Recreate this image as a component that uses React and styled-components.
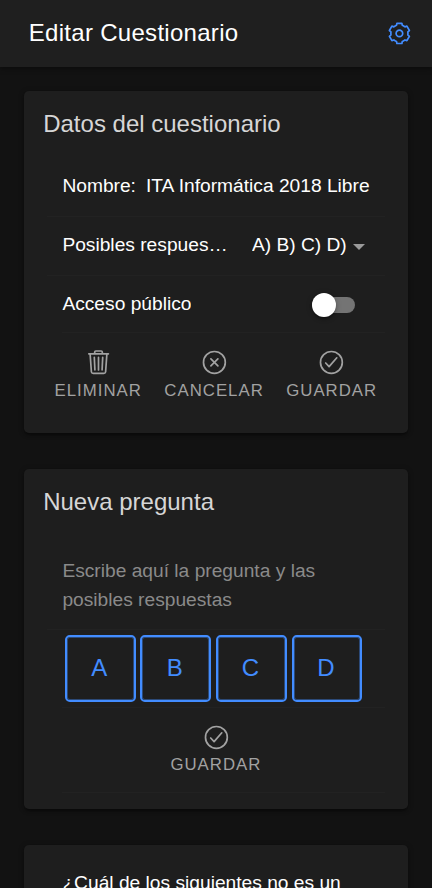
import React from "react";
import styled, { createGlobalStyle } from "styled-components";

const GlobalStyle = createGlobalStyle`
  * { box-sizing: border-box; }
  html, body { margin: 0; height: 100%; overflow: hidden; background: #121212; }
  body { font-family: "Liberation Sans", Arial, sans-serif; color: #fff; }
  button { font-family: inherit; }
`;

const Screen = styled.div`
  height: 888px;
  overflow: hidden;
  background: #121212;
  display: flex;
  flex-direction: column;
`;

const Header = styled.header`
  flex: none;
  height: 67.2px;
  padding: 0 18px 0 28.8px;
  display: flex;
  align-items: center;
  justify-content: space-between;
  background: #1f1f1f;
  box-shadow: 0 2px 5px rgba(0, 0, 0, 0.35);
`;

const Title = styled.h1`
  margin: 0 0 2px;
  font-size: 24px;
  font-weight: 400;
  line-height: 29px;
  letter-spacing: 0.29px;
`;

const Icon = styled.svg`
  display: block;
  width: 28.8px;
  height: 28.8px;
  margin-left: ${(p) => p.$shift || 0}px;
  fill: none;
  stroke: currentColor;
  stroke-width: 1.7;
  stroke-linecap: round;
  stroke-linejoin: round;
`;

const IconButton = styled.button`
  display: flex;
  padding: 0;
  border: 0;
  background: none;
  color: #428cff;
`;

const Content = styled.main`
  padding: 24px;
  display: flex;
  flex-direction: column;
  gap: 36px;
`;

const Card = styled.section`
  flex: none;
  height: ${(p) => p.$height}px;
  padding: ${(p) => p.$pad || "19.2px 19.2px 0"};
  border-radius: 4.8px;
  background: #1e1e1e;
  box-shadow: 0 3px 2px -2px rgba(0, 0, 0, 0.3), 0 2px 3px rgba(0, 0, 0, 0.2),
    0 1px 6px rgba(0, 0, 0, 0.2);
`;

const CardTitle = styled.h2`
  margin: 0;
  font-size: 24px;
  font-weight: 400;
  line-height: 28.8px;
  color: #d6d6d6;
`;

const List = styled.div`
  padding: ${(p) => p.$top}px 4px 0 4px;
  display: flex;
  flex-direction: column;
`;

const Row = styled.div`
  height: ${(p) => p.$height || 58.8}px;
  margin-left: ${(p) => (p.$inset ? 15.2 : 0)}px;
  padding-left: ${(p) => (p.$inset ? 0 : 15.2)}px;
  padding-bottom: ${(p) => p.$lift || 0}px;
  display: flex;
  align-items: center;
  border-bottom: 1px solid #222;
  font-size: 19.2px;
  white-space: nowrap;
`;

const Label = styled.span`
  width: ${(p) => (p.$width ? `${p.$width}px` : "auto")};
  margin-right: ${(p) => p.$gap || 0}px;
  overflow: hidden;
  text-overflow: ellipsis;
  line-height: 24px;
`;

const Caret = styled.span`
  margin: 4px 0 0 6px;
  border: 6px solid transparent;
  border-top-color: #9a9a9a;
  border-bottom: 0;
`;

const Track = styled.span`
  width: 43.2px;
  height: 16.8px;
  margin: 2px 29.6px 0 auto;
  display: flex;
  align-items: center;
  border-radius: 9px;
  background: #747474;
`;

const Knob = styled.span`
  width: 24px;
  height: 24px;
  border-radius: 50%;
  background: #fff;
  box-shadow: 0 3px 2px -2px rgba(0, 0, 0, 0.3), 0 2px 3px rgba(0, 0, 0, 0.2),
    0 1px 6px rgba(0, 0, 0, 0.2);
`;

const Actions = styled.div`
  padding: ${(p) => p.$pad};
  display: flex;
  justify-content: ${(p) => (p.$center ? "center" : "space-between")};
`;

const Action = styled.button`
  padding: 0;
  border: 0;
  background: none;
  display: flex;
  flex-direction: column;
  align-items: center;
  gap: 4px;
  color: #a2a2a2;
  font-size: 16.8px;
  line-height: 19px;
  letter-spacing: 1.01px;
  text-transform: uppercase;
`;

const Prompt = styled.p`
  height: 78px;
  margin: 0;
  padding: 5.5px 15.2px 0;
  border-bottom: 1px solid #222;
  color: #8a8a8a;
  font-size: 19.2px;
  line-height: 28.8px;
`;

const Answers = styled.div`
  height: 78px;
  margin-left: 15.2px;
  padding: 5.2px 2.4px 0;
  display: flex;
  gap: 4.8px;
  border-bottom: 1px solid #222;
`;

const Answer = styled.button`
  width: 70.8px;
  height: 67.2px;
  padding: 0 2px 2px 0;
  border: 2px solid #428cff;
  border-radius: 4.8px;
  box-shadow: inset 0 0 0 1px rgba(66, 140, 255, 0.4);
  background: none;
  color: #428cff;
  font-size: 24px;
`;

const Question = styled.p`
  margin: 0;
  font-size: 19.2px;
  line-height: 28.8px;
`;

const TOOTH = [[-3.9, -7.6], [-2.9, -8.1], [-2.5, -10.1], [2.5, -10.1], [2.9, -8.1], [3.9, -7.6]];
const GEAR = [0, 1, 2, 3, 4, 5]
  .flatMap((i) => {
    const c = Math.cos((i * Math.PI) / 3);
    const s = Math.sin((i * Math.PI) / 3);
    return TOOTH.map(([x, y]) => `${(x * c - y * s).toFixed(2)},${(x * s + y * c).toFixed(2)}`);
  })
  .join(" ");

const GearIcon = () => (
  <Icon viewBox="-14.4 -14.4 28.8 28.8">
    <polygon points={GEAR} />
    <circle r="3.3" />
  </Icon>
);

const TrashIcon = () => (
  <Icon viewBox="0 0 28.8 28.8">
    <path d="M4.8 5.8H24.4M10.7 5.6V4.1Q10.7 3 11.8 3H17.2Q18.3 3 18.3 4.1V5.6" />
    <path d="M6.1 5.8L7.4 24Q7.6 25.4 9.2 25.4H19.8Q21.4 25.4 21.6 24L22.9 5.8" />
    <path d="M10.3 9.4L10.9 21.9M14.5 9.4V21.9M18.7 9.4L18.1 21.9" />
  </Icon>
);

const CloseIcon = () => (
  <Icon viewBox="0 0 28.8 28.8" $shift={1}>
    <circle cx="14.4" cy="14.4" r="10.9" />
    <path d="M10.9 10.9L17.9 17.9M17.9 10.9L10.9 17.9" />
  </Icon>
);

const CheckIcon = ({ shift }) => (
  <Icon viewBox="0 0 28.8 28.8" $shift={shift}>
    <circle cx="14.4" cy="14.4" r="10.9" />
    <path d="M8.7 15L12.1 18.6L19.8 9.8" />
  </Icon>
);

export default function App() {
  return (
    <>
      <GlobalStyle />
      <Screen>
        <Header>
          <Title>Editar Cuestionario</Title>
          <IconButton aria-label="Ajustes"><GearIcon /></IconButton>
        </Header>
        <Content>
          <Card $height={341.8}>
            <CardTitle>Datos del cuestionario</CardTitle>
            <List $top={19}>
              <Row $lift={2}>
                <Label $gap={10}>Nombre:</Label>
                <Label>ITA Informática 2018 Libre</Label>
              </Row>
              <Row $lift={2}>
                <Label $width={166} $gap={23.5}>Posibles respuestas</Label>
                <Label>A) B) C) D)</Label>
                <Caret />
              </Row>
              <Row $inset $height={57.4}>
                <Label>Acceso público</Label>
                <Track><Knob /></Track>
              </Row>
            </List>
            <Actions $pad="15px 11.6px 0 11.4px">
              <Action><TrashIcon />Eliminar</Action>
              <Action><CloseIcon />Cancelar</Action>
              <Action><CheckIcon />Guardar</Action>
            </Actions>
          </Card>
          <Card $height={339.6}>
            <CardTitle>Nueva pregunta</CardTitle>
            <List $top={35}>
              <Prompt>Escribe aquí la pregunta y las posibles respuestas</Prompt>
              <Answers>
                {["A", "B", "C", "D"].map((letter) => (
                  <Answer key={letter}>{letter}</Answer>
                ))}
              </Answers>
              <Row $inset $height={85} $lift={3}>
                <Actions $center $pad="0 0 0 108px">
                  <Action><CheckIcon shift={0.6} />Guardar</Action>
                </Actions>
              </Row>
            </List>
          </Card>
          <Card $height={240} $pad="24px 38.4px">
            <Question>¿Cuál de los siguientes no es un</Question>
          </Card>
        </Content>
      </Screen>
    </>
  );
}
